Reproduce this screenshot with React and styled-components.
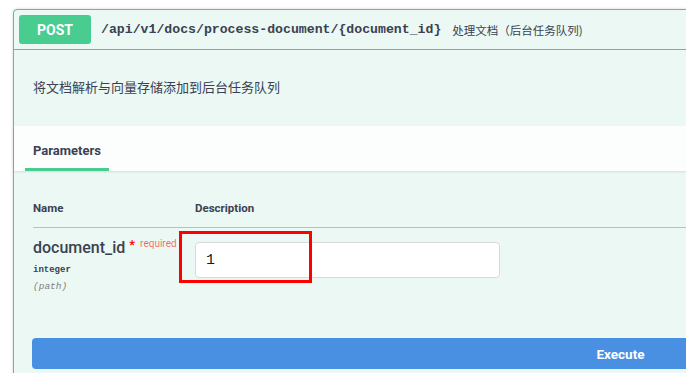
import React from 'react';
import styled, { createGlobalStyle } from 'styled-components';

const GlobalStyle = createGlobalStyle`
  html, body {
    margin: 0;
    padding: 0;
    background: #ffffff;
    overflow: hidden;
  }
  body {
    font-family: Roboto, "Noto Sans CJK SC", sans-serif;
    color: #3b4151;
  }
`;

/* outer page, holds the single opblock */
const Page = styled.div`
  padding: 9px 0 0 13px;
  width: 1300px;
`;

const Opblock = styled.div`
  width: 1216px;
  box-sizing: border-box;
  border: 1px solid #49cc90;
  border-radius: 4px;
  background: #ebf8f3;
  box-shadow: 0 0 3px rgba(0, 0, 0, 0.19);
`;

const Summary = styled.div`
  display: flex;
  align-items: center;
  height: 39px;
  padding: 0 5px;
  border-bottom: 1px solid #49cc90;
`;

const Method = styled.span`
  display: flex;
  align-items: center;
  justify-content: center;
  width: 72px;
  height: 29px;
  border-radius: 3px;
  background: #49cc90;
  color: #fff;
  font-size: 14px;
  font-weight: 700;
  margin-right: 10px;
`;

const Path = styled.span`
  font-family: "Liberation Mono", "DejaVu Sans Mono", monospace;
  font-weight: 700;
  font-size: 13.2px;
  color: #3b4151;
  margin-right: 11px;
`;

const SummaryText = styled.span`
  font-family: "Noto Sans CJK SC", sans-serif;
  font-size: 11.5px;
  color: #3b4151;
`;

const Description = styled.div`
  padding: 28px 19px 30px;
  font-family: "Noto Sans CJK SC", sans-serif;
  font-size: 13px;
  line-height: 18px;
`;

const SectionHeader = styled.div`
  display: flex;
  align-items: flex-end;
  height: 45px;
  padding-left: 11px;
  background: rgba(255, 255, 255, 0.8);
  box-shadow: 0 1px 2px rgba(0, 0, 0, 0.1);
`;

const Tab = styled.div`
  padding: 0 8px 10px;
  font-size: 13px;
  font-weight: 700;
  border-bottom: 3px solid #49cc90;
`;

const Params = styled.div`
  padding: 30px 0 0 19px;
`;

const HeadRow = styled.div`
  display: grid;
  grid-template-columns: 162px 1fr;
  padding-bottom: 12px;
  border-bottom: 1px solid rgba(59, 65, 81, 0.3);
  font-size: 11.5px;
  font-weight: 700;
`;

const Row = styled.div`
  display: grid;
  grid-template-columns: 162px 1fr;
  padding-top: 10px;
  height: 100px;
`;

const ParamName = styled.div`
  font-size: 16px;
  font-weight: 500;
  line-height: 20px;
  white-space: nowrap;

  span {
    color: red;
    font-size: 13px;
    margin-left: 4px;
    position: relative;
    top: -4px;
  }
  small {
    color: rgba(255, 0, 0, 0.6);
    font-size: 10px;
    font-weight: 400;
    margin-left: 5px;
    position: relative;
    top: -6px;
  }
`;

const ParamType = styled.div`
  font-family: "Liberation Mono", monospace;
  font-size: 9px;
  font-weight: 700;
  margin-top: 5px;
`;

const ParamIn = styled.div`
  font-family: "Liberation Mono", monospace;
  font-size: 9.5px;
  font-style: italic;
  color: #808080;
  margin-top: 6px;
`;

const InputCell = styled.div`
  position: relative;
  padding-top: 4px;
`;

const Input = styled.input`
  box-sizing: border-box;
  width: 305px;
  height: 36px;
  padding: 0 10px;
  background: #fff;
  border: 1px solid #d9d9d9;
  border-radius: 4px;
  font-family: "Liberation Mono", monospace;
  font-size: 15px;
  color: #1a1a1a;
  outline: none;
`;

/* red annotation box drawn over the input */
const Highlight = styled.div`
  position: absolute;
  left: -16px;
  top: -7px;
  width: 133px;
  height: 52px;
  box-sizing: border-box;
  border: 3px solid #ff0000;
`;

const ExecuteWrap = styled.div`
  padding: 0 0 20px 18px;
`;

const Execute = styled.button`
  display: block;
  width: 1177px;
  height: 31px;
  border: none;
  border-radius: 4px;
  background: #4990e2;
  color: #fff;
  font-family: Roboto, sans-serif;
  font-size: 13.5px;
  font-weight: 700;
`;

const App = () => {
  return (
    <Page>
      <GlobalStyle />
      <Opblock>
        <Summary>
          <Method>POST</Method>
          <Path>/api/v1/docs/process-document/&#123;document_id&#125;</Path>
          <SummaryText>处理文档（后台任务队列)</SummaryText>
        </Summary>
        <Description>将文档解析与向量存储添加到后台任务队列</Description>
        <SectionHeader>
          <Tab>Parameters</Tab>
        </SectionHeader>
        <Params>
          <HeadRow>
            <div>Name</div>
            <div>Description</div>
          </HeadRow>
          <Row>
            <div>
              <ParamName>
                document_id<span>*</span>
                <small>required</small>
              </ParamName>
              <ParamType>integer</ParamType>
              <ParamIn>(path)</ParamIn>
            </div>
            <InputCell>
              <Input defaultValue="1" />
              <Highlight />
            </InputCell>
          </Row>
        </Params>
        <ExecuteWrap>
          <Execute>Execute</Execute>
        </ExecuteWrap>
      </Opblock>
    </Page>
  );
};

export default App;
